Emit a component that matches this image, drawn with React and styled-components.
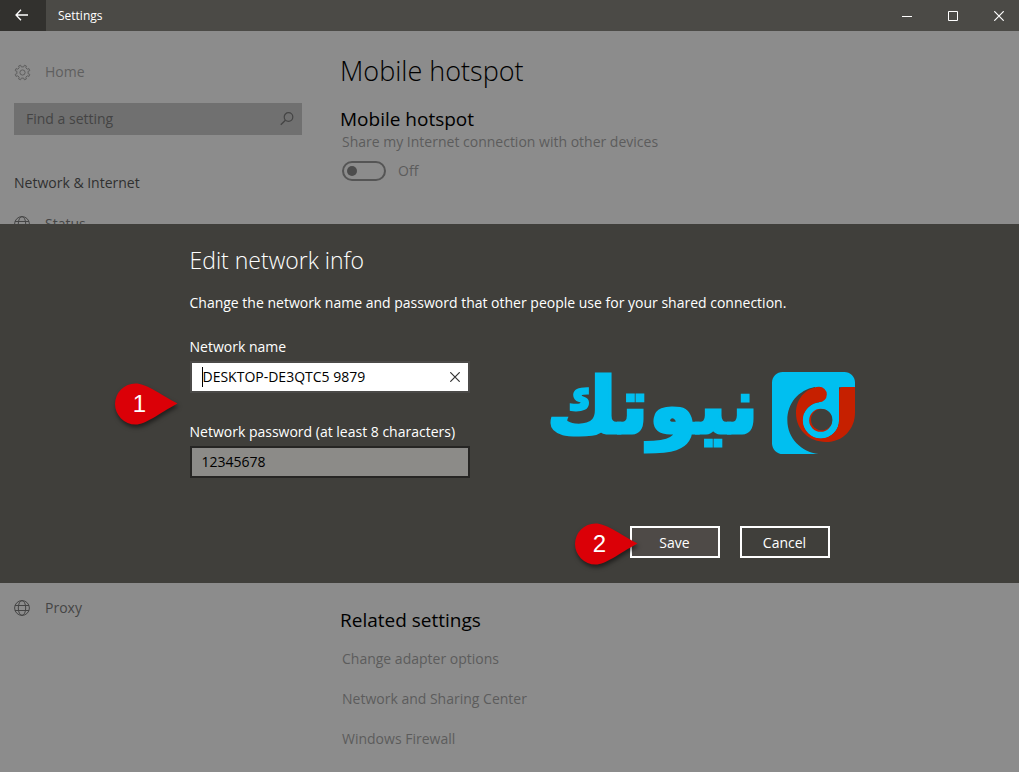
import React, { useState } from 'react';
import styled, { createGlobalStyle } from 'styled-components'


const GlobalStyle = createGlobalStyle `
* {
    box-sizing: border-box;
}
body {
    margin: 0;
    background: #8c8c8c;
    font-family: "Segoe UI", "Open Sans", "Noto Sans", sans-serif;
    font-size: 14px;
    line-height: 20px;
}
h1, h2, h3, p, ul {
    margin: 0;
    padding: 0;
    font-weight: 400;
}
button, input {
    font: inherit;
}
svg {
    display: block;
}
`

const Window = styled.div `
min-height: 100vh;
display: flex;
flex-direction: column;
`

const TitleBar = styled.header `
display: flex;
align-items: stretch;
height: 31px;
background: #4b4a46;
color: #fff;
`

const TitleBarButton = styled.button `
display: flex;
align-items: center;
justify-content: center;
width: 46px;
padding: 0 0 0 6px;
border: 0;
color: #fff;
background: transparent;
`

const BackButton = styled(TitleBarButton) `
padding: 0 2px 2px 0;
background: #32312e;
`

const WindowTitle = styled.div `
flex: 1;
padding: 0 12px;
font-size: 12px;
line-height: 31px;
`

const Page = styled.div `
position: relative;
flex: 1;
display: grid;
grid-template-columns: 340px 1fr;
grid-template-rows: 552px auto;
`

const Sidebar = styled.div `
display: flex;
flex-direction: column;
padding: ${props => props.$lower ? '15px' : '31px'} 38px 0 14px;
`

const SidebarLink = styled.a `
display: flex;
align-items: center;
gap: 14px;
height: 20px;
color: ${props => props.$dim ? '#5f5f5f' : '#454545'};
text-decoration: none;

svg {
    flex: none;
}
`

const SearchBox = styled.label `
display: flex;
align-items: center;
height: 32px;
margin: 21px 0 38px;
padding: 0 8px 0 12px;
background: #707070;
color: #444;
`

const SearchInput = styled.input `
flex: 1;
min-width: 0;
padding: 0;
border: 0;
outline: 0;
background: transparent;
color: #444;

&::placeholder {
    color: #444;
    opacity: 1;
}
`

const SidebarHeading = styled.h2 `
margin-bottom: 21px;
font-size: 14px;
line-height: 20px;
color: #303030;
`

const Main = styled.div `
padding-top: ${props => props.$lower ? '9px' : '20px'};
`

const PageTitle = styled.h1 `
font-size: 27px;
font-weight: 300;
line-height: 40px;
color: #000;
`

const SectionTitle = styled.h2 `
margin-top: 15px;
font-size: 19px;
line-height: 26px;
color: #000;
`

const Hint = styled.p `
padding-left: 2px;
color: #5c5c5c;
`

const ToggleRow = styled.label `
display: flex;
align-items: center;
gap: 12px;
margin-top: 9px;
padding-left: 2px;
color: #5c5c5c;
`

const Toggle = styled.input `
appearance: none;
display: flex;
align-items: center;
width: 44px;
height: 20px;
margin: 0;
padding: 0 3px;
border: 2px solid #555;
border-radius: 10px;

&::before {
    content: "";
    width: 10px;
    height: 10px;
    border-radius: 50%;
    background: #4c4c4c;
}

&:checked {
    justify-content: flex-end;
}
`

const RelatedLinks = styled.ul `
display: flex;
flex-direction: column;
gap: 20px;
margin-top: 16px;
padding: 0 0 23px 2px;
list-style: none;
`

const RelatedLink = styled.a `
color: #5c5c5c;
text-decoration: none;
`

const Overlay = styled.div `
position: absolute;
inset: 0;
padding-top: 193px;
`

const Dialog = styled.section `
display: flex;
justify-content: center;
padding: 20px 20px 25px;
background: #403f3b;
color: #fff;
`

const DialogForm = styled.form `
position: relative;
width: 640px;
`

const DialogTitle = styled.h2 `
font-size: 23px;
font-weight: 300;
line-height: 33px;
`

const DialogText = styled.p `
margin: 16px 0 24px;
`

const Field = styled.div `
position: relative;
width: 280px;
margin-bottom: 29px;
`

const FieldLabel = styled.label `
display: block;
margin-bottom: 4px;
`

const FieldBox = styled.div `
display: flex;
align-items: center;
height: 32px;
padding: 0 8px 0 10px;
border: 2px solid ${props => props.$focused ? '#4b4a48' : '#262523'};
background: ${props => props.$focused ? '#fff' : '#8c8b88'};
`

const Caret = styled.span `
width: 1px;
height: 20px;
background: #000;
`

const FieldInput = styled.input `
flex: 1;
min-width: 0;
padding: 0;
border: 0;
outline: 0;
background: transparent;
color: #000;
`

const ClearButton = styled.button `
padding: 0;
border: 0;
background: transparent;
color: #333;
`

const DialogActions = styled.div `
display: flex;
justify-content: flex-end;
gap: 20px;
margin-top: 48px;
`

const Action = styled.div `
position: relative;
`

const ActionButton = styled.button `
width: 90px;
height: 32px;
padding: 2px 0 0;
border: 2px solid #fff;
background: ${props => props.$active ? '#4e4a47' : 'transparent'};
color: #fff;
`

const Callout = styled.div `
position: absolute;
right: ${props => props.$right};
top: ${props => props.$top};
width: 62px;
height: 42px;
color: #fff;

svg {
    overflow: visible;
    filter: drop-shadow(1px 3px 2px rgba(0, 0, 0, 0.5));
}
`

const CalloutNumber = styled.span `
position: absolute;
inset: 0 12px 0 0;
font-family: "Liberation Sans", sans-serif;
font-size: 24px;
line-height: 42px;
text-align: center;
`

const Brand = styled.div `
position: absolute;
right: -25px;
top: 128px;
display: flex;
align-items: flex-start;
gap: 13px;
color: #00bff0;
`

const BrandName = styled.span `
font-family: "DejaVu Sans", sans-serif;
font-size: 78px;
font-weight: 700;
line-height: 68px;
-webkit-text-stroke: 3px #00bff0;
`

const stroke = {
    fill: 'none',
    stroke: 'currentColor',
}

function GearIcon() {
    return (
        <svg width="17" height="17" viewBox="0 0 17 17" {...stroke}>
            <path d="M6.600 1.200 7.300 2.900H9.700L10.400 1.200 12.400 2 11.800 3.800 13.200 5.200 15 4.600 15.800 6.600 14.100 7.300V9.700L15.800 10.400 15 12.400 13.200 11.800 11.800 13.200 12.400 15 10.400 15.800 9.700 14.100H7.300L6.600 15.800 4.600 15 5.200 13.200 3.800 11.800 2 12.400 1.200 10.400 2.900 9.700V7.300L1.200 6.600 2 4.600 3.800 5.200 5.200 3.800 4.600 2Z" />
            <circle cx="8.500" cy="8.500" r="2.600" />
        </svg>
    );
}

function GlobeIcon() {
    return (
        <svg width="17" height="17" viewBox="0 0 17 17" {...stroke}>
            <circle cx="8" cy="8" r="7.400" />
            <ellipse cx="8" cy="8" rx="3.700" ry="7.400" />
            <path d="M1 5.500H15M1 10.500H15" />
        </svg>
    );
}

function SearchIcon() {
    return (
        <svg width="14" height="14" viewBox="0 0 14 14" {...stroke}>
            <circle cx="8.500" cy="5" r="4.300" strokeWidth="1.200" />
            <path d="M5.400 8.200 .8 12.800" strokeWidth="1.300" />
        </svg>
    );
}

function CrossIcon() {
    return (
        <svg width="10" height="10" viewBox="0 0 10 10" {...stroke}>
            <path d="M.3.3 9.700 9.700M9.700.3.3 9.700" strokeWidth="1.200" />
        </svg>
    );
}

function BrandMark() {
    return (
        <svg width="83" height="82" viewBox="216 36 249 246">
            <path fill="#00bff0" d="M248 36H433A32 32 0 0 1 465 68V82H417V182A54 54 0 1 1 357 128L345 81C296 90 262 130 262 180C262 236 305 276 355 282H248A32 32 0 0 1 216 250V68A32 32 0 0 1 248 36Z" />
            <path fill="#c62000" d="M357 80A23.500 23.500 0 0 1 357 127A54 54 0 1 0 417 182V94Q417 81 430 81H465V158C465 208 428 246 378 246C328 246 288 210 288 160C288 116 316 84 357 80Z" />
            <circle cx="362" cy="181" r="44" fill="#c62000" stroke="#00bff0" strokeWidth="19" />
            <circle cx="365" cy="179" r="32" fill="#403f3b" />
        </svg>
    );
}

function StepCallout(props) {
    return (
        <Callout $right={props.right} $top={props.top}>
            <svg width="62" height="42" viewBox="0 0 62 42">
                <path fill="#db0007" d="M20.500 .5C31 .5 43 10 62.500 20.500C43 31 31 41.500 20.500 41.500A20.500 20.500 0 0 1 20.500 .5Z" />
            </svg>
            <CalloutNumber>{props.number}</CalloutNumber>
        </Callout>
    );
}

function EditNetworkDialog() {
    const [name, setName] = useState('DESKTOP-DE3QTC5 9879');
    const [password, setPassword] = useState('12345678');

    return (
        <Overlay>
            <Dialog role="dialog" aria-labelledby="dialog-title">
                <DialogForm onSubmit={(e) => e.preventDefault()}>
                    <DialogTitle id="dialog-title">Edit network info</DialogTitle>
                    <DialogText>
                        Change the network name and password that other people use for your shared connection.
                    </DialogText>

                    <Field>
                        <FieldLabel htmlFor="network-name">Network name</FieldLabel>
                        <FieldBox $focused>
                            <Caret />
                            <FieldInput id="network-name" value={name} onChange={(e) => setName(e.target.value)} />
                            <ClearButton type="button" aria-label="Clear" onClick={() => setName('')}>
                                <CrossIcon />
                            </ClearButton>
                        </FieldBox>
                        <StepCallout number="1" right="293px" top="46px" />
                    </Field>

                    <Field>
                        <FieldLabel htmlFor="network-password">Network password (at least 8 characters)</FieldLabel>
                        <FieldBox>
                            <FieldInput id="network-password" value={password} onChange={(e) => setPassword(e.target.value)} />
                        </FieldBox>
                    </Field>

                    <DialogActions>
                        <Action>
                            <ActionButton type="submit" $active>Save</ActionButton>
                            <StepCallout number="2" right="83px" top="-3px" />
                        </Action>
                        <Action>
                            <ActionButton type="button">Cancel</ActionButton>
                        </Action>
                    </DialogActions>

                    <Brand>
                        <BrandName lang="ar" dir="rtl">نيوتك</BrandName>
                        <BrandMark />
                    </Brand>
                </DialogForm>
            </Dialog>
        </Overlay>
    );
}

function App() {
    const [on, setOn] = useState(false);

    return (
        <Window>
            <GlobalStyle />
            <TitleBar>
                <BackButton aria-label="Back">
                    <svg width="14" height="12" viewBox="0 0 14 12" {...stroke} strokeWidth="1.300">
                        <path d="M1 6H13M6 .8 1 6 6 11.200" />
                    </svg>
                </BackButton>
                <WindowTitle>Settings</WindowTitle>
                <TitleBarButton aria-label="Minimize">
                    <svg width="10" height="10" viewBox="0 0 10 10" {...stroke}>
                        <path d="M0 5.500H10" />
                    </svg>
                </TitleBarButton>
                <TitleBarButton aria-label="Maximize">
                    <svg width="10" height="10" viewBox="0 0 10 10" {...stroke}>
                        <path d="M.5.5H9.500V9.500H.5Z" />
                    </svg>
                </TitleBarButton>
                <TitleBarButton aria-label="Close">
                    <CrossIcon />
                </TitleBarButton>
            </TitleBar>

            <Page>
                <Sidebar as="nav">
                    <SidebarLink href="#home" $dim><GearIcon />Home</SidebarLink>
                    <SearchBox>
                        <SearchInput type="text" placeholder="Find a setting" aria-label="Find a setting" />
                        <SearchIcon />
                    </SearchBox>
                    <SidebarHeading>Network &amp; Internet</SidebarHeading>
                    <SidebarLink href="#status"><GlobeIcon />Status</SidebarLink>
                </Sidebar>
                <Main as="main">
                    <PageTitle>Mobile hotspot</PageTitle>
                    <SectionTitle>Mobile hotspot</SectionTitle>
                    <Hint>Share my Internet connection with other devices</Hint>
                    <ToggleRow>
                        <Toggle type="checkbox" checked={on} onChange={() => setOn(!on)} />
                        {on ? 'On' : 'Off'}
                    </ToggleRow>
                </Main>

                <Sidebar as="nav" $lower>
                    <SidebarLink href="#proxy"><GlobeIcon />Proxy</SidebarLink>
                </Sidebar>
                <Main as="section" $lower>
                    <SectionTitle>Related settings</SectionTitle>
                    <RelatedLinks>
                        <li><RelatedLink href="#adapter">Change adapter options</RelatedLink></li>
                        <li><RelatedLink href="#sharing">Network and Sharing Center</RelatedLink></li>
                        <li><RelatedLink href="#firewall">Windows Firewall</RelatedLink></li>
                    </RelatedLinks>
                </Main>

                <EditNetworkDialog />
            </Page>
        </Window>
    );
}

export default App;
